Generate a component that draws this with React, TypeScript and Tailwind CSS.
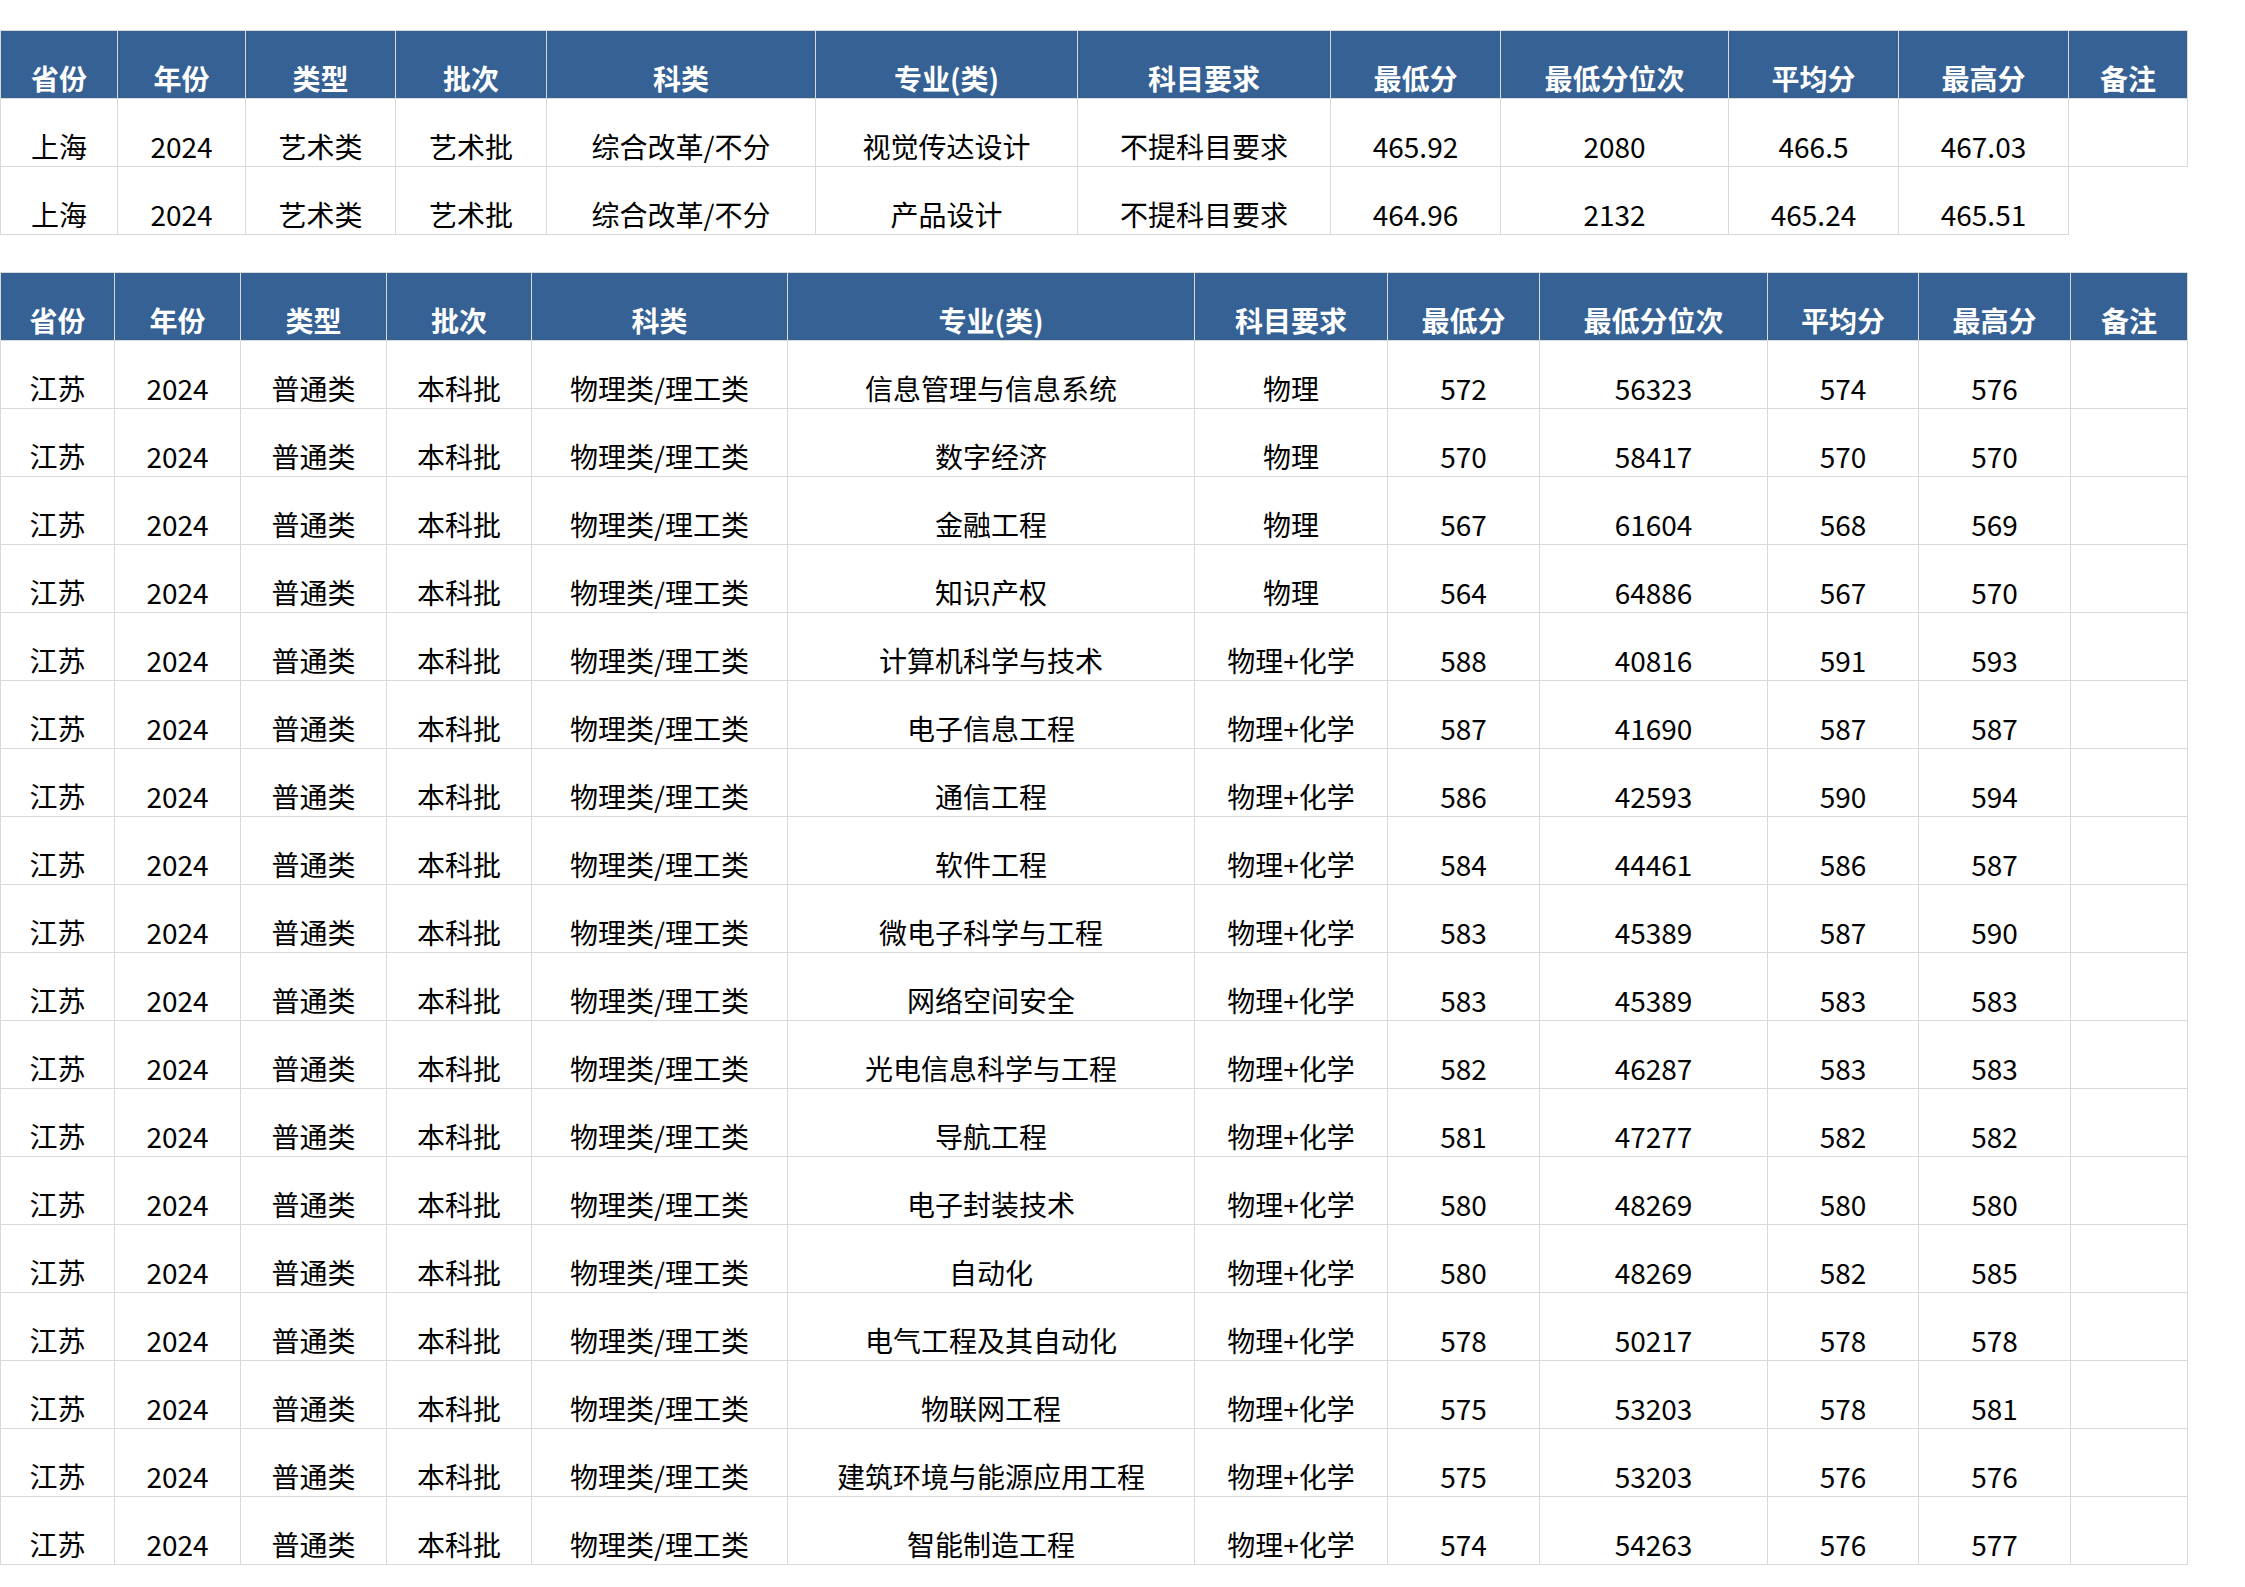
const cols1 = 'grid-cols-[118px_128px_150px_151px_269px_262px_253px_170px_228px_170px_170px_119px]'
const cols2 = 'grid-cols-[115px_126px_146px_145px_256px_407px_193px_152px_228px_151px_152px_117px]'

const headers = ['省份', '年份', '类型', '批次', '科类', '专业(类)', '科目要求', '最低分', '最低分位次', '平均分', '最高分', '备注']

const shanghai: string[][] = [
  ['上海', '2024', '艺术类', '艺术批', '综合改革/不分', '视觉传达设计', '不提科目要求', '465.92', '2080', '466.5', '467.03', ''],
  ['上海', '2024', '艺术类', '艺术批', '综合改革/不分', '产品设计', '不提科目要求', '464.96', '2132', '465.24', '465.51', ''],
]

// 专业, 科目要求, 最低分, 位次, 平均分, 最高分
const jiangsuRaw: [string, string, string, string, string, string][] = [
  ['信息管理与信息系统', '物理', '572', '56323', '574', '576'],
  ['数字经济', '物理', '570', '58417', '570', '570'],
  ['金融工程', '物理', '567', '61604', '568', '569'],
  ['知识产权', '物理', '564', '64886', '567', '570'],
  ['计算机科学与技术', '物理+化学', '588', '40816', '591', '593'],
  ['电子信息工程', '物理+化学', '587', '41690', '587', '587'],
  ['通信工程', '物理+化学', '586', '42593', '590', '594'],
  ['软件工程', '物理+化学', '584', '44461', '586', '587'],
  ['微电子科学与工程', '物理+化学', '583', '45389', '587', '590'],
  ['网络空间安全', '物理+化学', '583', '45389', '583', '583'],
  ['光电信息科学与工程', '物理+化学', '582', '46287', '583', '583'],
  ['导航工程', '物理+化学', '581', '47277', '582', '582'],
  ['电子封装技术', '物理+化学', '580', '48269', '580', '580'],
  ['自动化', '物理+化学', '580', '48269', '582', '585'],
  ['电气工程及其自动化', '物理+化学', '578', '50217', '578', '578'],
  ['物联网工程', '物理+化学', '575', '53203', '578', '581'],
  ['建筑环境与能源应用工程', '物理+化学', '575', '53203', '576', '576'],
  ['智能制造工程', '物理+化学', '574', '54263', '576', '577'],
]

const jiangsu = jiangsuRaw.map((r) => ['江苏', '2024', '普通类', '本科批', '物理类/理工类', ...r, ''])

function Cell({ text, first, bare }: { text: string; first?: boolean; bare?: boolean }) {
  return (
    <div
      className={`h-[68px] flex items-end justify-center pb-[6px] whitespace-nowrap ${
        bare ? '' : 'border-r border-b border-[#d9d9d9]'
      } ${first ? 'border-l border-l-[#d9d9d9]' : ''}`}
    >
      <span className="leading-none">{text}</span>
    </div>
  )
}

function HeaderRow() {
  return (
    <>
      {headers.map((h, i) => (
        <div
          key={h}
          className={`h-[68px] bg-[#356194] text-white font-bold flex items-end justify-center pb-[6px] border-r border-b border-[#d9d9d9] ${
            i === 0 ? 'border-l' : ''
          }`}
        >
          <span className="leading-none">{h}</span>
        </div>
      ))}
    </>
  )
}

function Table({ cols, rows, open }: { cols: string; rows: string[][]; open?: boolean }) {
  return (
    <div className={`grid ${cols} border-t border-[#d9d9d9] w-fit`}>
      <HeaderRow />
      {rows.map((r, ri) =>
        r.map((c, ci) => (
          <Cell
            key={`${ri}-${ci}`}
            text={c}
            first={ci === 0}
            bare={open && ri === rows.length - 1 && ci === r.length - 1}
          />
        ))
      )}
    </div>
  )
}

export default function App() {
  return (
    <div className="w-[2245px] h-[1587px] overflow-hidden bg-white text-black text-[28px] font-['Noto_Sans_CJK_SC','Noto_Sans',sans-serif]">
      <div className="pt-[30px]">
        <Table cols={cols1} rows={shanghai} open />
      </div>
      <div className="mt-[37px]">
        <Table cols={cols2} rows={jiangsu} />
      </div>
    </div>
  )
}
